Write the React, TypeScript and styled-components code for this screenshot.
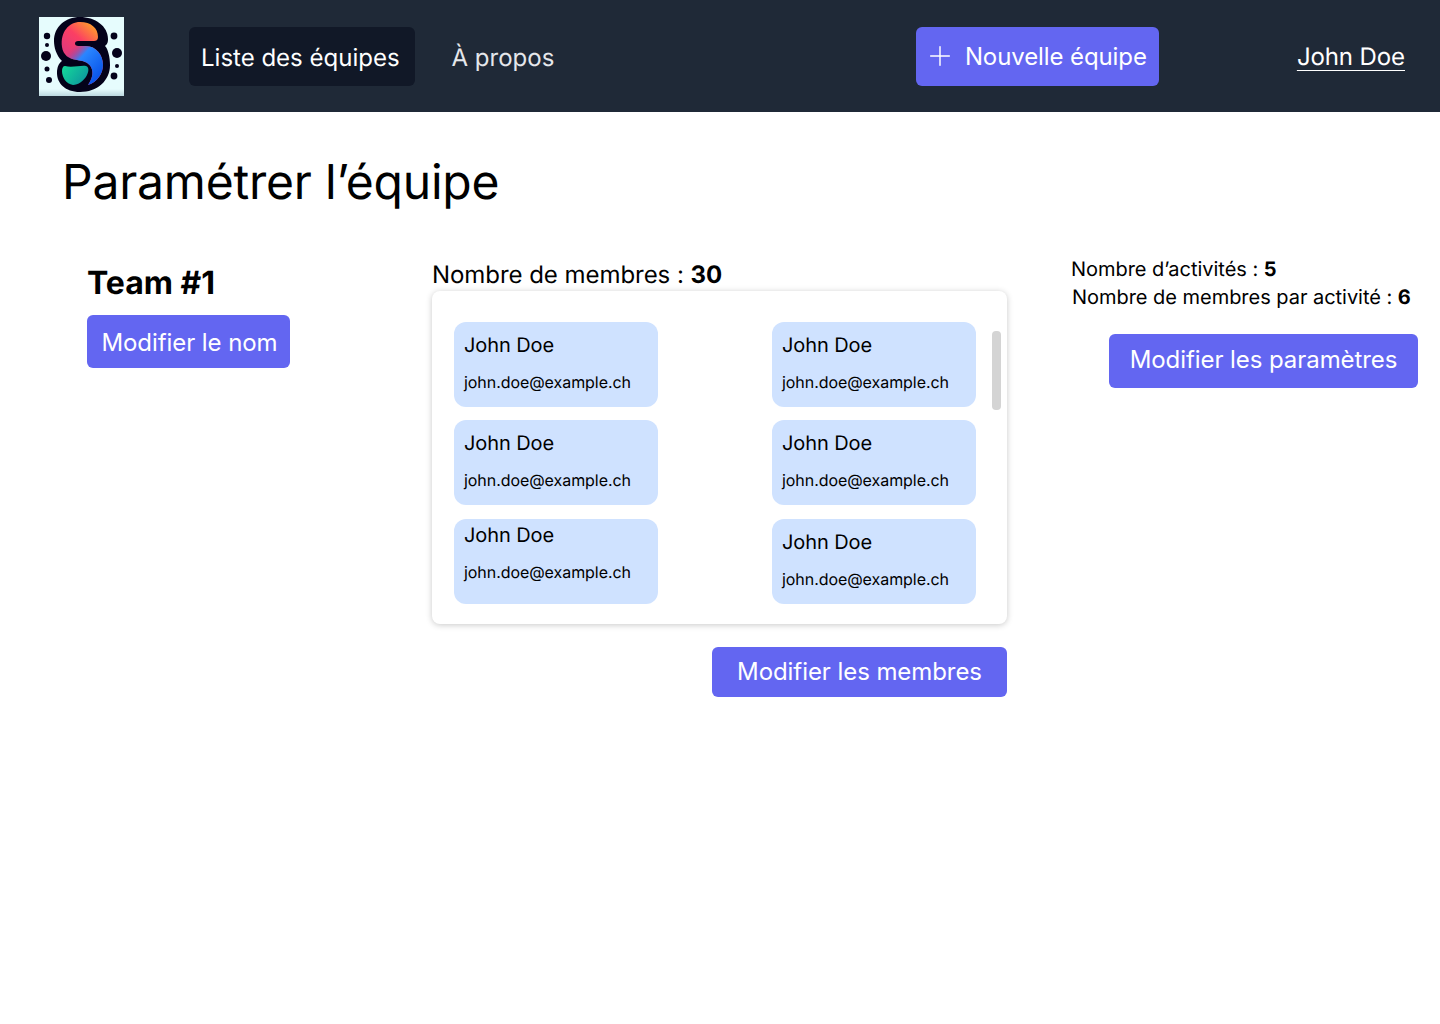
import React from 'react';
import styled, { createGlobalStyle } from 'styled-components';
import { Plus } from 'lucide-react';

const GlobalStyle = createGlobalStyle`
  html, body {
    margin: 0;
    padding: 0;
    background: #ffffff;
    font-family: Inter, "Liberation Sans", sans-serif;
    color: #000000;
    text-rendering: geometricPrecision;
  }
`;

const Header = styled.header`
  display: flex;
  align-items: center;
  height: 112px;
  padding: 0 35px 0 39px;
  background: #1f2937;
`;

const LogoFrame = styled.svg`
  display: block;
  width: 85px;
  height: 79px;
  margin-right: 65px;
  flex: none;
`;

const Nav = styled.nav`
  display: flex;
  align-items: center;
  gap: 37px;
  flex: 1;
`;

const NavLink = styled.a<{ $active?: boolean }>`
  display: flex;
  align-items: center;
  height: 59px;
  padding: 2px ${(p) => (p.$active ? '15px' : '0')} 0 ${(p) => (p.$active ? '12px' : '0')};
  box-sizing: border-box;
  border-radius: 6px;
  background: ${(p) => (p.$active ? '#111827' : 'transparent')};
  color: ${(p) => (p.$active ? '#ffffff' : '#e5e7eb')};
  font-size: 24px;
`;

const NewTeamButton = styled.button`
  display: flex;
  align-items: center;
  gap: 9px;
  width: 243px;
  height: 59px;
  margin-right: 138px;
  padding: 0 8px;
  border: 0;
  border-radius: 6px;
  background: #6366f1;
  color: #ffffff;
  font-family: inherit;
  font-size: 24px;
  letter-spacing: -0.1px;
  white-space: nowrap;
`;

const UserLink = styled.a`
  color: #ffffff;
  font-size: 24px;
  letter-spacing: -0.1px;
  text-decoration: underline;
  text-underline-offset: 5px;
  text-decoration-thickness: 1px;
`;

const Main = styled.main`
  padding: 41px 22px 0 63px;
`;

const Title = styled.h1`
  margin: 0 0 46px -1px;
  font-size: 48px;
  font-weight: 400;
  line-height: 58px;
  letter-spacing: -0.2px;
`;

const Columns = styled.div`
  display: grid;
  grid-template-columns: 369px 575px 1fr;
`;

const LeftColumn = styled.section`
  padding: 6px 0 0 24px;
`;

const TeamName = styled.h2`
  margin: 0 0 13px;
  font-size: 32px;
  font-weight: 700;
  line-height: 39px;
`;

const MiddleColumn = styled.section`
  display: flex;
  flex-direction: column;
`;

const MemberCount = styled.p`
  margin: 3px 0 2px;
  font-size: 24px;
  line-height: 29px;
  letter-spacing: -0.05px;
`;

const Panel = styled.div`
  position: relative;
  display: grid;
  grid-template-columns: 204px 204px;
  column-gap: 114px;
  row-gap: 13.4px;
  height: 333px;
  padding: 31px 0 20px 22px;
  box-sizing: border-box;
  border-radius: 8px;
  background: #ffffff;
  box-shadow: 0 1px 6px rgba(0, 0, 0, 0.22);
`;

const ScrollThumb = styled.div`
  position: absolute;
  top: 40px;
  right: 6px;
  width: 9px;
  height: 79px;
  border-radius: 4px;
  background: #d4d4d4;
`;

const MemberCard = styled.div<{ $tight?: boolean }>`
  height: 85px;
  padding: ${(p) => (p.$tight ? '4px' : '11px')} 10px 0;
  box-sizing: border-box;
  border-radius: 12px;
  background: #cfe2ff;
`;

const MemberName = styled.div`
  font-size: 20px;
  line-height: 24px;
  letter-spacing: -0.1px;
`;

const MemberEmail = styled.div`
  margin-top: 13px;
  font-size: 16px;
  line-height: 24px;
  letter-spacing: -0.06px;
`;

const ActionButton = styled.button<{ $width: number; $height: number; $pad?: string }>`
  display: block;
  width: ${(p) => p.$width}px;
  height: ${(p) => p.$height}px;
  padding: ${(p) => p.$pad ?? '0'};
  border: 0;
  border-radius: 6px;
  background: #6366f1;
  color: #ffffff;
  font-family: inherit;
  font-size: 24px;
  letter-spacing: -0.07px;
  white-space: nowrap;
`;

const MembersFooter = styled.div`
  display: flex;
  justify-content: flex-end;
  margin-top: 23px;
`;

const RightColumn = styled.section`
  padding: 0 0 0 64px;
  margin-top: -2px;
`;

const StatLine = styled.p<{ $inset?: boolean }>`
  margin: 0 0 0 ${(p) => (p.$inset ? '1px' : '0')};
  font-size: 20px;
  line-height: 28px;
  letter-spacing: -0.03px;
  white-space: nowrap;
`;

const RightAction = styled.div`
  margin: 23px 0 0 38px;
`;

const Logo = () => (
  <LogoFrame viewBox="0 0 85 79">
    <defs>
      <linearGradient id="sTop" x1="52" y1="5" x2="28" y2="32" gradientUnits="userSpaceOnUse">
        <stop offset="0" stopColor="#ff9f2a" />
        <stop offset="0.55" stopColor="#fb3f63" />
        <stop offset="1" stopColor="#e53a78" />
      </linearGradient>
      <linearGradient id="sLow" x1="30" y1="34" x2="58" y2="60" gradientUnits="userSpaceOnUse">
        <stop offset="0" stopColor="#a83a98" stopOpacity="0" />
        <stop offset="0.35" stopColor="#2a86ff" />
        <stop offset="1" stopColor="#0b57ea" />
      </linearGradient>
      <linearGradient id="blobGrad" x1="25" y1="50" x2="48" y2="68" gradientUnits="userSpaceOnUse">
        <stop offset="0" stopColor="#14d69a" />
        <stop offset="1" stopColor="#0c8f9e" />
      </linearGradient>
      <linearGradient id="floorGrad" x1="0" y1="72" x2="0" y2="79" gradientUnits="userSpaceOnUse">
        <stop offset="0" stopColor="#e6fcfd" />
        <stop offset="1" stopColor="#bcd8df" />
      </linearGradient>
      <clipPath id="sLowClip">
        <rect x="0" y="27" width="85" height="52" />
      </clipPath>
    </defs>
    <rect width="85" height="79" fill="#e6fcfd" />
    <rect y="72" width="85" height="7" fill="url(#floorGrad)" />
    <g fill="#04021a">
      <circle cx="8" cy="19" r="3.2" />
      <circle cx="8" cy="28" r="2" />
      <circle cx="7" cy="39" r="5" />
      <circle cx="8" cy="52" r="2.5" />
      <circle cx="10" cy="63" r="3" />
      <circle cx="75" cy="19" r="3.4" />
      <circle cx="78" cy="36" r="5" />
      <circle cx="78" cy="49" r="2" />
      <circle cx="75" cy="59" r="3.4" />
      <path d="M41 0 C56 0 69 9 69 22 C69 26 68 27 66 29 C69 32 71 40 71 48 C71 64 58 75 41 75 C26 75 18 66 18 56 C18 50 20 46 23 44 C17 38 15 30 15 24 C15 10 26 0 41 0 Z" />
    </g>
    <path
      d="M26 49 C33 51 42 48 47 49 C50 50 50 54 48 58 C45 64 39 68 34 68 C27 67 23 60 23 54 C23 51 24 49 26 49 Z"
      fill="url(#blobGrad)"
    />
    <path
      d="M41 5 C52 5 59 11 59 20 C59 23 57 24 55 24 L39 24 C35 24 35 29 39 29 L47 29 C57 29 64 38 64 48 C64 57 58 65 49 68 C53 62 55 56 52 50 C49 45 44 44 38 43 C30 42 24 38 23 30 C21 15 30 5 41 5 Z"
      fill="url(#sTop)"
    />
    <path
      d="M39 29 L47 29 C57 29 64 38 64 48 C64 57 58 65 49 68 C53 62 55 56 52 50 C49 45 44 44 38 43 C30 42 24 38 23 30 L23 27 L36 27 Z"
      fill="url(#sLow)"
      clipPath="url(#sLowClip)"
    />
  </LogoFrame>
);

const members: { tight?: boolean }[] = [{}, {}, {}, {}, { tight: true }, {}];

export default function App() {
  return (
    <>
      <GlobalStyle />
      <Header>
        <Logo />
        <Nav>
          <NavLink $active>Liste des équipes</NavLink>
          <NavLink>À propos</NavLink>
        </Nav>
        <NewTeamButton>
          <Plus size={32} strokeWidth={1.1} />
          Nouvelle équipe
        </NewTeamButton>
        <UserLink>John Doe</UserLink>
      </Header>
      <Main>
        <Title>Paramétrer l’équipe</Title>
        <Columns>
          <LeftColumn>
            <TeamName>Team #1</TeamName>
            <ActionButton $width={203} $height={53} $pad="1px 0 0 2px">Modifier le nom</ActionButton>
          </LeftColumn>
          <MiddleColumn>
            <MemberCount>
              Nombre de membres : <b>30</b>
            </MemberCount>
            <Panel>
              {members.map((m, i) => (
                <MemberCard key={i} $tight={m.tight}>
                  <MemberName>John Doe</MemberName>
                  <MemberEmail>john.doe@example.ch</MemberEmail>
                </MemberCard>
              ))}
              <ScrollThumb />
            </Panel>
            <MembersFooter>
              <ActionButton $width={295} $height={50} $pad="0 0 2px">Modifier les membres</ActionButton>
            </MembersFooter>
          </MiddleColumn>
          <RightColumn>
            <StatLine>
              Nombre d’activités : <b>5</b>
            </StatLine>
            <StatLine $inset>
              Nombre de membres par activité : <b>6</b>
            </StatLine>
            <RightAction>
              <ActionButton $width={309} $height={54} $pad="0 0 3px">Modifier les paramètres</ActionButton>
            </RightAction>
          </RightColumn>
        </Columns>
      </Main>
    </>
  );
}
